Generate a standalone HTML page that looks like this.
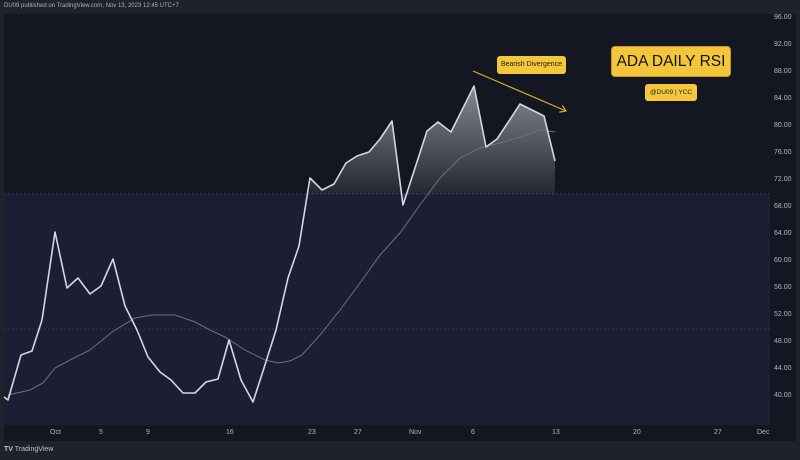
<!DOCTYPE html>
<html><head><meta charset="utf-8"><style>
*{margin:0;padding:0}
body{width:800px;height:460px;overflow:hidden;background:#1e222d;font-family:"Liberation Sans",sans-serif;position:relative}
.t{position:absolute;color:#b2b5be;font-size:7px}
</style></head><body>
<svg width="800" height="460" style="position:absolute;left:0;top:0">
<defs>
<linearGradient id="g" x1="0" y1="0" x2="0" y2="1">
<stop offset="0" stop-color="#9a9ca6" stop-opacity="0.85"/>
<stop offset="1" stop-color="#9a9ca6" stop-opacity="0.05"/>
</linearGradient>
<marker id="ar" markerWidth="8" markerHeight="8" refX="6" refY="4" orient="auto" markerUnits="userSpaceOnUse">
<path d="M0,0 L6,4 L0,8" fill="none" stroke="#d9ac2e" stroke-width="1.2"/>
</marker>
</defs>
<rect x="0" y="0" width="800" height="14" fill="#1e222d"/>
<rect x="4" y="14" width="766" height="180" fill="#141722"/>
<rect x="4" y="194" width="766" height="231" fill="#1d1e33"/>
<rect x="770" y="14" width="26" height="411" fill="#141722"/>
<rect x="4" y="425" width="792" height="16" fill="#141722"/>
<line x1="4" y1="194" x2="770" y2="194" stroke="#3a3c55" stroke-dasharray="2,2"/>
<line x1="4" y1="329" x2="770" y2="329" stroke="#34364e" stroke-dasharray="2,2"/>
<polygon fill="url(#g)" points="310,194 310,178 322,190 334,184 346,163 357,156 369,152 380,139 392,121 403,205 427,131 438,122 451,132 474,86 486,147 497,139 509,121 520,104 532,110 544,116 555,161 555,194"/>
<polyline fill="none" stroke="#6e7080" stroke-width="1" points="8,395 30,390 43,383 55,368 70,360 90,350 112,332 135,318 152,315 175,315 195,322 210,330 225,337 245,350 265,360 278,363 290,361 302,355 320,335 340,310 360,283 380,255 400,233 420,205 440,178 460,158 480,148 500,143 520,137 540,130 555,132"/>
<polyline fill="none" stroke="#d6d7de" stroke-width="1.6" stroke-linejoin="round" points="4,397 8,400 21,355 32,351 42,320 55,232 67,288 78,278 90,294 101,286 113,259 125,306 137,330 148,357 160,372 171,380 183,393 195,393 206,382 218,379 229,340 241,380 253,402 264,368 276,330 288,278 299,246 310,178 322,190 334,184 346,163 357,156 369,152 380,139 392,121 403,205 427,131 438,122 451,132 474,86 486,147 497,139 509,121 520,104 532,110 544,116 555,161"/>
<line x1="473" y1="71" x2="566" y2="111" stroke="#d9ac2e" stroke-width="1.2" marker-end="url(#ar)"/>
</svg>
<div class="t" style="left:4px;top:3px;font-size:6px;color:#aeb1ba">DU09 published on TradingView.com, Nov 13, 2023 12:45 UTC+7</div>
<div style="position:absolute;left:497px;top:56px;width:69px;height:18px;background:#f4c73b;border-radius:3px;font-size:7px;line-height:18px;text-align:center;color:#222;white-space:nowrap">Bearish Divergence</div>
<div style="position:absolute;left:611px;top:46px;width:118px;height:29px;background:#f4c73b;border:1px solid #c99a20;border-radius:4px;font-size:15.5px;line-height:29px;text-align:center;color:#111;font-family:'Liberation Sans',sans-serif;white-space:nowrap">ADA DAILY RSI</div>
<div style="position:absolute;left:645px;top:84px;width:52px;height:17px;background:#f4c73b;border-radius:3px;font-size:6.5px;line-height:17px;text-align:center;color:#222;white-space:nowrap">@DU09 | YCC</div>
<div class="t" style="left:774px;top:14px">96.00</div>
<div class="t" style="left:774px;top:41px">92.00</div>
<div class="t" style="left:774px;top:68px">88.00</div>
<div class="t" style="left:774px;top:95px">84.00</div>
<div class="t" style="left:774px;top:122px">80.00</div>
<div class="t" style="left:774px;top:149px">76.00</div>
<div class="t" style="left:774px;top:176px">72.00</div>
<div class="t" style="left:774px;top:203px">68.00</div>
<div class="t" style="left:774px;top:230px">64.00</div>
<div class="t" style="left:774px;top:257px">60.00</div>
<div class="t" style="left:774px;top:284px">56.00</div>
<div class="t" style="left:774px;top:311px">52.00</div>
<div class="t" style="left:774px;top:338px">48.00</div>
<div class="t" style="left:774px;top:365px">44.00</div>
<div class="t" style="left:774px;top:392px">40.00</div>
<div class="t" style="left:50px;top:429px">Oct</div>
<div class="t" style="left:99px;top:429px">5</div>
<div class="t" style="left:146px;top:429px">9</div>
<div class="t" style="left:226px;top:429px">16</div>
<div class="t" style="left:308px;top:429px">23</div>
<div class="t" style="left:354px;top:429px">27</div>
<div class="t" style="left:409px;top:429px">Nov</div>
<div class="t" style="left:471px;top:429px">6</div>
<div class="t" style="left:552px;top:429px">13</div>
<div class="t" style="left:633px;top:429px">20</div>
<div class="t" style="left:714px;top:429px">27</div>
<div class="t" style="left:757px;top:429px">Dec</div>
<div class="t" style="left:4px;top:446px;font-size:7px;color:#c0c3cc"><b>TV</b> TradingView</div>
</body></html>
